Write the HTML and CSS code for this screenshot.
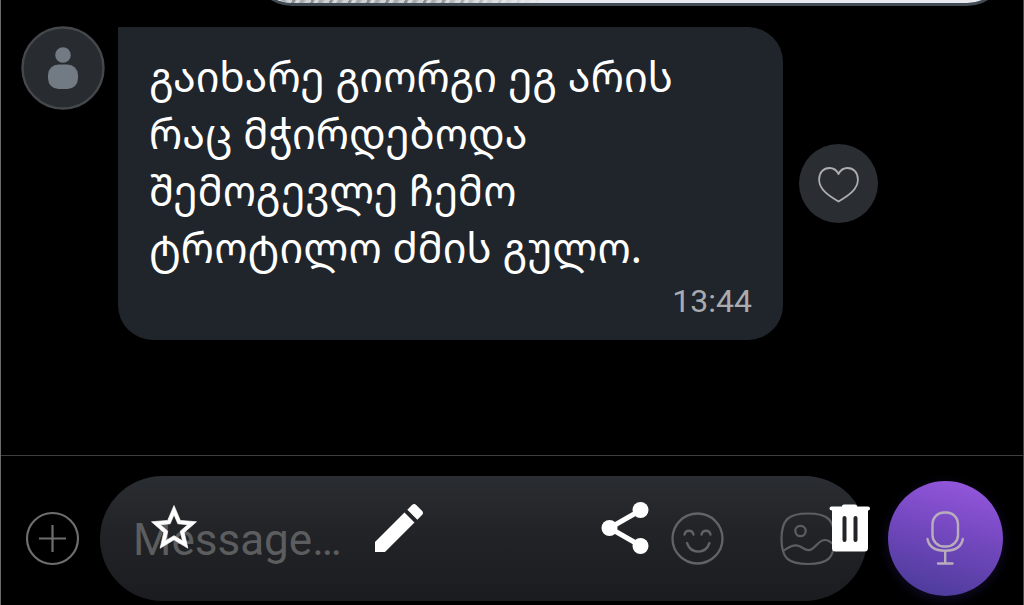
FILE: index.html
```html
<!DOCTYPE html>
<html lang="ka">
<head>
<meta charset="utf-8">
<title>Chat</title>
<link rel="stylesheet" href="styles.css">
</head>
<body>
<div class="app">
  <div class="previous"><div class="photo"><div class="photo-detail"></div></div></div>
  <main class="chat">
    <div class="avatar">
      <svg width="84" height="84" viewBox="0 0 84 84"><circle cx="42" cy="42" r="40.5" fill="#282b2f" stroke="#44474c" stroke-width="2.4"/><circle cx="42" cy="29" r="7.8" fill="#727a84"/><rect x="27" y="38.500" width="30" height="24.500" rx="10.5" fill="#727a84"/></svg>
    </div>
    <div class="bubble">
      <p class="message"><span class="line">გაიხარე გიორგი ეგ არის</span><span class="line">რაც მჭირდებოდა</span><span class="line">შემოგევლე ჩემო</span><span class="line">ტროტილო ძმის გულო.</span></p>
      <time class="time">13:44</time>
    </div>
    <button class="like" aria-label="Like">
      <svg width="44" height="40" viewBox="0 0 44 40" fill="none" stroke="#acaeb0" stroke-width="1.8" stroke-linejoin="round"><path d="M21.500 10C19.500 6 16 4 12.500 4C6.500 4 2.100 8.500 2.100 15.500C2.100 25.500 12 32 21.500 37.500C31 32 40.900 25.500 40.900 15.500C40.900 8.500 36.500 4 30.500 4C27 4 23.500 6 21.500 10Z"/></svg>
    </button>
  </main>
  <footer class="composer">
    <svg class="add" width="54" height="54" viewBox="0 0 54 54" fill="none" stroke="#6e6e6e" stroke-width="2.2"><circle cx="27.500" cy="27.500" r="25.500"/><path d="M27.500 14V41M14 27.500H41"/></svg>
    <div class="field">
      <span class="placeholder">Message…</span>
      <svg class="smile" width="54" height="54" viewBox="0 0 54 54" fill="none" stroke="#626365" stroke-width="2.300" stroke-linecap="round"><circle cx="26.500" cy="26.500" r="25"/><path d="M13.500 22.500C14.500 17.500 21.500 17.500 22.500 22.500M30.500 22.500C31.500 17.500 38.500 17.500 39.500 22.500M16 31C20 42.500 34.500 42.500 38.500 31"/></svg>
      <svg class="gallery" width="56" height="54" viewBox="0 0 56 54" fill="none" stroke="#5d5e60" stroke-width="2.200"><path d="M28 1.500C48 1.500 54.500 8 54.500 27S48 52 28 52S1.500 46 1.500 27S8 1.500 28 1.500Z"/><circle cx="20.500" cy="19" r="5.200"/><path d="M3 39C9 35 14 32 19 34C24 36 27 40 32 37C37 34 39 28 45 28C49 28 52 31 54 33"/></svg>
    </div>
    <button class="record" aria-label="Record">
      <svg width="40" height="56" viewBox="0 0 40 56" fill="none" stroke="#b9adbd" stroke-width="2.400" stroke-linecap="round"><rect x="6.500" y="1.500" width="25.500" height="34" rx="11.500"/><path d="M1.500 28C3 36 9 39.700 19 39.700S35.500 36 36.800 28M19.200 40V52.500M12 52.500H26.500"/></svg>
    </button>
  </footer>
  <div class="tools">
    <svg class="star" viewBox="0 0 24 24"><path fill="#fff" stroke="#fff" stroke-width=".3" stroke-linejoin="round" d="M22 9.240l-7.190-.62L12 2 9.190 8.630 2 9.240l5.460 4.730L5.820 21 12 17.270 18.180 21l-1.630-7.030L22 9.240zM12 15.400l-3.760 2.270 1-4.280-3.320-2.880 4.380-.38L12 6.100l1.710 4.040 4.380.38-3.320 2.880 1 4.280L12 15.400z"/></svg>
    <svg class="pencil" viewBox="0 0 24 24"><path fill="#fff" d="M3 17.250V21h3.750L17.810 9.940l-3.750-3.750L3 17.250zM20.710 7.040c.39-.39.39-1.020 0-1.410l-2.340-2.340c-.39-.39-1.020-.39-1.410 0l-1.830 1.830 3.750 3.750 1.830-1.830z"/></svg>
    <svg class="share" viewBox="0 0 48 52"><path d="M40 8L8.500 26L40 44" fill="none" stroke="#fff" stroke-width="5"/><g fill="#fff"><circle cx="39.500" cy="8" r="8"/><circle cx="8.500" cy="26" r="8"/><circle cx="39.500" cy="44" r="8"/></g></svg>
    <svg class="trash" viewBox="0 0 42 48"><path fill="#fff" fill-rule="evenodd" d="M13 2Q13 .5 15 .5H26Q28 .5 28 2V2.500H39Q41 2.500 41 4.500Q41 6.500 39 6.500V44Q39 47.500 35.500 47.500H6.500Q3 47.500 3 44V6.500Q.5 6.500 .5 4.500Q.5 2.500 2.500 2.500H13ZM13.500 14V36Q13.500 38 15.500 38T17.500 36V14Q17.500 12 15.500 12T13.500 14ZM24.500 14V36Q24.500 38 26.500 38T28.500 36V14Q28.500 12 26.500 12T24.500 14Z"/></svg>
  </div>
</div>
</body>
</html>
```
FILE: styles.css
```css
* { box-sizing: border-box; }
body { margin: 0; background: #000; }
button { padding: 0; border: 0; }
svg { display: block; flex: none; }
.app {
  position: relative;
  display: flex;
  flex-direction: column;
  width: 1024px;
  height: 605px;
  overflow: hidden;
  background: #000;
  border-left: 1px solid #6c6c6c;
  border-right: 1px solid #454545;
  font-family: Roboto, sans-serif;
}
.previous {
  display: flex;
  align-items: flex-end;
  justify-content: flex-end;
  flex: none;
  height: 6px;
  padding-right: 16px;
  overflow: hidden;
}
.photo {
  display: flex;
  align-items: flex-end;
  flex: none;
  width: 755px;
  height: 80px;
  overflow: hidden;
  background: #e8eaef;
  border: 3px solid #414b54;
  border-top: 0;
  border-radius: 0 0 40px 40px;
}
.photo-detail {
  width: 290px;
  height: 3px;
  background:
    linear-gradient(90deg, transparent 60%, #e8eaef),
    repeating-linear-gradient(115deg, #8b8e91 0 2px, #d8dadd 4px 6px, #a8abae 8px 10px, #cfd1d4 13px 17px);
}
.chat {
  display: flex;
  align-items: flex-start;
  flex: 1;
  padding: 21px 0 0 20px;
}
.avatar { flex: none; width: 97px; margin-top: -1px; }
.bubble {
  flex: none;
  width: 665px;
  height: 313px;
  padding: 21px 31px 0 31px;
  background: #20242b;
  border-radius: 0 35px 35px 35px;
}
.message {
  margin: 0;
  color: #fff;
  font: 41.5px/57px "Noto Sans Georgian", "Noto Sans", "DejaVu Sans", sans-serif;
}
.line { display: block; white-space: nowrap; }
.time {
  display: block;
  margin-top: 6px;
  color: #a9abae;
  font-size: 32px;
  line-height: 38px;
  text-align: right;
}
.like {
  display: flex;
  align-items: center;
  justify-content: center;
  width: 79px;
  height: 79px;
  margin: 117px 0 0 16px;
  border-radius: 50%;
  background: #2a2d31;
}
.composer {
  display: flex;
  align-items: flex-start;
  flex: none;
  height: 150px;
  padding: 20px 20px 0 24px;
  border-top: 1px solid #3e3e3e;
}
.add { margin-top: 35px; overflow: visible; }
.field {
  display: flex;
  align-items: center;
  width: 767px;
  height: 125px;
  margin-left: 21px;
  padding-left: 33px;
  border-radius: 63px;
  background: linear-gradient(#2a2d31, #222428 40%, #1b1c1f);
}
.placeholder { width: 538px; padding-top: 2px; color: #5c5d5e; font-size: 44px; line-height: 50px; }
.gallery { margin-left: 55px; }
.record {
  display: flex;
  align-items: center;
  justify-content: center;
  width: 115px;
  height: 115px;
  margin: 5px 0 0 21px;
  border-radius: 50%;
  background: linear-gradient(195deg, #9557dd 5%, #7448bf 45%, #4b3b99 95%);
  box-shadow: 0 3px 12px #120d2b;
}
.tools { position: absolute; inset: 0; pointer-events: none; }
.tools svg { position: absolute; }
.star { left: 146px; top: 501px; width: 54px; height: 54px; }
.pencil { left: 366px; top: 496px; width: 64px; height: 64px; }
.share { left: 600px; top: 502px; width: 48px; height: 52px; }
.trash { left: 828px; top: 504px; width: 42px; height: 48px; }
```
